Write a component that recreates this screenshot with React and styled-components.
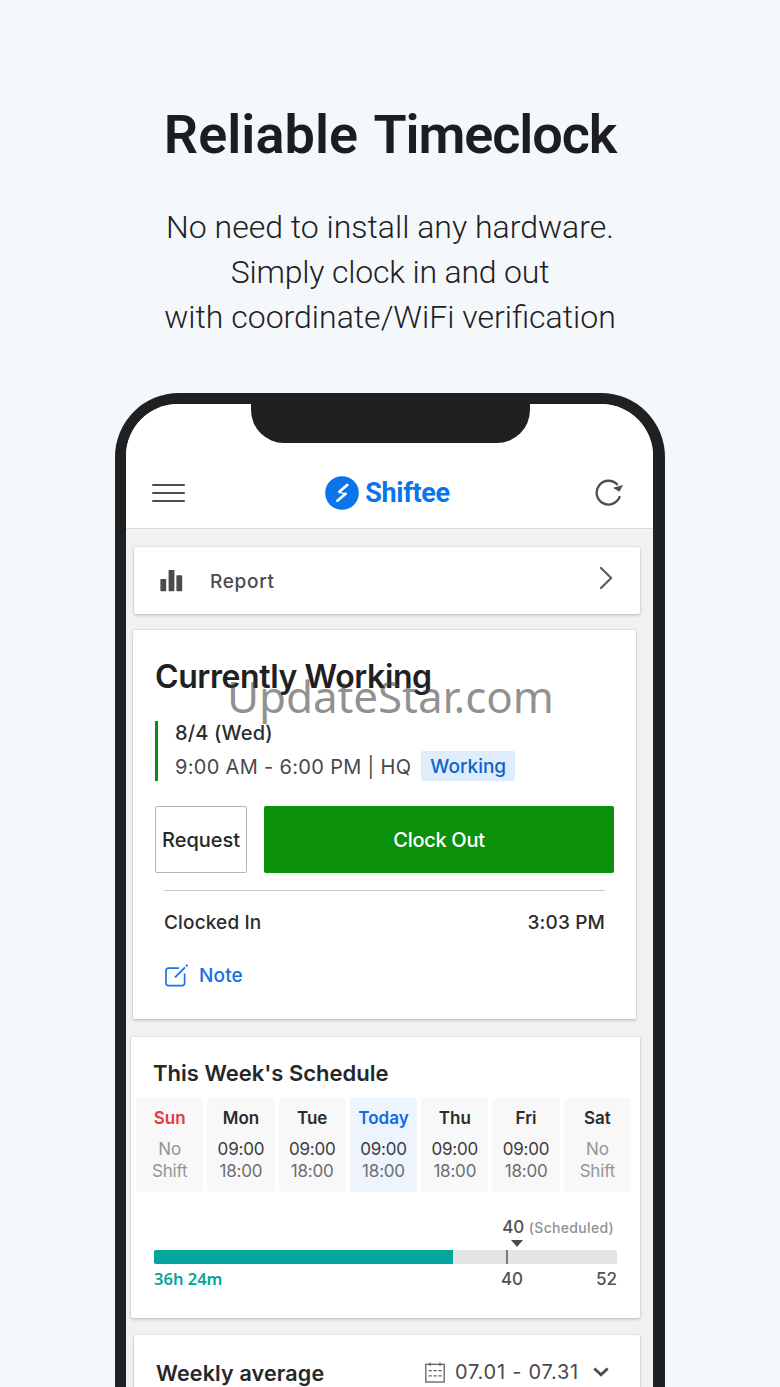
import styled, { createGlobalStyle, css } from "styled-components";

const week = [
  { day: "Sun", off: true, tone: "#e03c3c" },
  { day: "Mon", start: "09:00", end: "18:00" },
  { day: "Tue", start: "09:00", end: "18:00" },
  { day: "Today", start: "09:00", end: "18:00", today: true, tone: "#0f6be6" },
  { day: "Thu", start: "09:00", end: "18:00" },
  { day: "Fri", start: "09:00", end: "18:00" },
  { day: "Sat", off: true },
];

const worked = 299;
const limit = 463;

const ShifteeMark = () => (
  <svg width="34" height="34" viewBox="-17 -17 34 34">
    <circle r="16.8" fill="#0a75eb" />
    <path
      d="M5.2 -8 L-2.6 -1.2 M3.6 0.8 L-4.6 7.7"
      stroke="#fff"
      strokeWidth="2.8"
      strokeLinecap="round"
    />
    <path d="M-2.4 -0.4 L3 0.6" stroke="#fff" strokeWidth="1.2" />
  </svg>
);

const RefreshIcon = () => (
  <svg width="28" height="28" viewBox="0 0 28 28" fill="none">
    <path
      d="M24.9 17.2 A11.9 11.9 0 1 1 22.6 5.9"
      stroke="#4c4e50"
      strokeWidth="2.3"
    />
    <path d="M18 8.8 L28 6 L24.4 12.8 Z" fill="#4c4e50" />
  </svg>
);

const ReportIcon = () => (
  <svg width="23" height="22" viewBox="0 0 23 22" fill="#4a4b4e">
    <rect x="0.4" y="9" width="5.8" height="12.2" rx="0.6" />
    <rect x="8.6" y="0" width="5.8" height="21.2" rx="0.6" />
    <rect x="16.4" y="5.2" width="5.8" height="16" rx="0.6" />
  </svg>
);

const ChevronRight = () => (
  <svg width="14" height="24" viewBox="0 0 14 24" fill="none">
    <path
      d="M2 2 L12.2 12 L2 22"
      stroke="#5b5d5f"
      strokeWidth="2.2"
      strokeLinecap="round"
      strokeLinejoin="round"
    />
  </svg>
);

const NoteIcon = () => (
  <svg width="24" height="24" viewBox="0 0 24 24" fill="none" stroke="#1a73e8" strokeWidth="1.7">
    <path d="M15 4.2 H4.2 A2.2 2.2 0 0 0 2 6.4 V19.4 A2.2 2.2 0 0 0 4.2 21.6 H18.4 A2.2 2.2 0 0 0 20.6 19.4 V9.6" />
    <path d="M11 13.4 L21 3.4" strokeWidth="2" />
    <path d="M22 2.4 L23.6 0.8" strokeWidth="2" />
  </svg>
);

const CalendarIcon = () => (
  <svg width="20" height="21" viewBox="0 0 20 21" fill="none" stroke="#5f6163" strokeWidth="1.3">
    <rect x="0.8" y="2.3" width="18.4" height="17.7" />
    <path d="M5 0.5 V4 M15 0.5 V4" />
    <path d="M3.6 8.6 H16.6 M3.6 13.9 H16.6" strokeWidth="1.4" strokeDasharray="3.2 1.7" />
  </svg>
);

const ChevronDown = () => (
  <svg width="16" height="10" viewBox="0 0 16 10" fill="none">
    <path d="M1.3 1.4 L8 7.8 L14.7 1.4" stroke="#4c4e50" strokeWidth="2.8" />
  </svg>
);

const App = () => {
  return (
    <Page>
      <GlobalStyle />
      <Title>
        <Word $spacing="0.05px">Reliable</Word> <Word $spacing="-1.1px">Timeclock</Word>
      </Title>
      <Subtitle>
        <Line>No need to install any hardware.</Line>
        <Line $spacing="-0.18px">Simply clock in and out</Line>
        <Line>with coordinate/WiFi verification</Line>
      </Subtitle>

      <Phone>
        <Screen>
          <TopBar>
            <Notch />
            <Nav>
              <Menu>
                <MenuLine />
                <MenuLine />
                <MenuLine />
              </Menu>
              <Brand>
                <ShifteeMark />
                <BrandName>Shiftee</BrandName>
              </Brand>
              <Refresh>
                <RefreshIcon />
              </Refresh>
            </Nav>
          </TopBar>

          <ReportCard>
            <ReportMark>
              <ReportIcon />
            </ReportMark>
            <ReportLabel>Report</ReportLabel>
            <ChevronRight />
          </ReportCard>

          <StatusCard>
            <StatusTitle>Currently Working</StatusTitle>
            <Shift>
              <ShiftDate>8/4 (Wed)</ShiftDate>
              <ShiftRow>
                <ShiftTime>9:00 AM - 6:00 PM | HQ</ShiftTime>
                <Badge>Working</Badge>
              </ShiftRow>
            </Shift>
            <Buttons>
              <Button>Request</Button>
              <Button $primary>Clock Out</Button>
            </Buttons>
            <Details>
              <DetailRow>
                <span>Clocked In</span>
                <span>3:03 PM</span>
              </DetailRow>
              <NoteLink>
                <NoteIcon />
                Note
              </NoteLink>
            </Details>
          </StatusCard>

          <WeekCard>
            <WeekTitle>This Week's Schedule</WeekTitle>
            <Days>
              {week.map((d) => (
                <Day key={d.day} $today={d.today}>
                  <DayName $tone={d.tone}>{d.day}</DayName>
                  <DayTime $off={d.off}>{d.off ? "No" : d.start}</DayTime>
                  <DayTime $off={d.off} $end>
                    {d.off ? "Shift" : d.end}
                  </DayTime>
                </Day>
              ))}
            </Days>
            <Progress>
              <Scheduled>
                40 <small>(Scheduled)</small>
              </Scheduled>
              <Pointer />
              <Track>
                <Fill style={{ width: `${(worked / limit) * 100}%` }} />
                <Tick />
              </Track>
              <Scale>
                <Worked>36h 24m</Worked>
                <span>40</span>
                <span>52</span>
              </Scale>
            </Progress>
          </WeekCard>

          <AverageCard>
            <AverageTitle>Weekly average</AverageTitle>
            <Range>
              <CalendarIcon />
              <RangeText>07.01 - 07.31</RangeText>
              <ChevronDown />
            </Range>
          </AverageCard>
        </Screen>
      </Phone>
      <Watermark>UpdateStar.com</Watermark>
    </Page>
  );
};

const GlobalStyle = createGlobalStyle`
  * {
    box-sizing: border-box;
  }

  body {
    margin: 0;
    background: #f4f8fb;
    font-family: Inter, "Liberation Sans", sans-serif;
  }

  svg {
    display: block;
    flex: none;
  }
`;

const Page = styled.div`
  position: relative;
  width: 780px;
  height: 1387px;
  overflow: hidden;
  padding-top: 103px;
  background: #f4f8fb;
`;

const Title = styled.h1`
  margin: 0;
  text-align: center;
  font: 600 54px/64px Roboto, sans-serif;
  word-spacing: 2px;
  color: #1c1d20;
`;

const Word = styled.span`
  letter-spacing: ${(p) => p.$spacing};
`;

const Subtitle = styled.div`
  margin-top: 38px;
  text-align: center;
  font: 300 32px/45px Roboto, sans-serif;
  color: #1f2123;
`;

const Line = styled.p`
  margin: 0;
  letter-spacing: ${(p) => p.$spacing || "0"};
`;

const Phone = styled.div`
  width: 550px;
  height: 1100px;
  margin: 53px 0 0 115px;
  padding: 11px 12px 0 11px;
  border-radius: 64px;
  background: #1f2022;
`;

const Screen = styled.div`
  height: 100%;
  overflow: hidden;
  border-radius: 52px 52px 0 0;
  background: #eff1f3;
`;

const TopBar = styled.div`
  height: 125px;
  border-bottom: 1px solid #d9dbdd;
  background: #fff;
`;

const Notch = styled.div`
  width: 279px;
  height: 39px;
  margin-left: 125px;
  border-radius: 0 0 33px 33px;
  background: #1f2022;
`;

const Nav = styled.div`
  display: grid;
  grid-template-columns: 1fr auto 1fr;
  align-items: center;
  height: 85px;
  padding: 15px 30px 0 26px;
`;

const Menu = styled.div`
  display: flex;
  flex-direction: column;
  gap: 6px;
  width: 33px;
`;

const MenuLine = styled.div`
  height: 2px;
  border-radius: 1px;
  background: #4a4c4e;
`;

const Brand = styled.div`
  display: flex;
  align-items: center;
  gap: 6px;
`;

const BrandName = styled.span`
  font: 700 27px/32px Roboto, sans-serif;
  letter-spacing: -0.35px;
  color: #0a75eb;
`;

const Refresh = styled.div`
  justify-self: end;
`;

const card = css`
  border-radius: 2px;
  background: #fff;
  box-shadow: 0 0 1px 1px rgba(50, 60, 70, 0.08), 0 2px 3px rgba(50, 60, 70, 0.16);
`;

const ReportCard = styled.div`
  ${card}
  display: flex;
  align-items: center;
  width: 506px;
  height: 67px;
  margin: 18px 0 0 8px;
  padding: 0 27px 5px 26px;
`;

const ReportMark = styled.div`
  padding-top: 5px;
`;

const ReportLabel = styled.span`
  flex: 1;
  padding: 6px 0 0 27px;
  font-size: 19px;
  font-weight: 500;
  letter-spacing: 0.7px;
  color: #4a4b4e;
`;

const StatusCard = styled.div`
  ${card}
  width: 503px;
  height: 389px;
  margin: 16px 0 0 7px;
  padding: 27px 22px 0;
`;

const StatusTitle = styled.h2`
  margin: 0;
  font-size: 32px;
  line-height: 40px;
  font-weight: 600;
  letter-spacing: -0.4px;
  color: #1f2022;
`;

const Shift = styled.div`
  margin-top: 24px;
  padding-left: 17px;
  border-left: 3px solid #0a900a;
`;

const ShiftDate = styled.div`
  font-size: 20px;
  line-height: 24px;
  font-weight: 500;
  letter-spacing: 0.15px;
  color: #2b2c2e;
`;

const ShiftRow = styled.div`
  display: flex;
  align-items: center;
  gap: 10px;
  height: 30px;
  margin-top: 6px;
`;

const ShiftTime = styled.span`
  padding-top: 1px;
  font-size: 20px;
  letter-spacing: 0.32px;
  white-space: nowrap;
  color: #48494c;
`;

const Badge = styled.span`
  height: 30px;
  padding: 0 9px;
  border-radius: 2px;
  background: #dfecfb;
  font-size: 19px;
  line-height: 31px;
  font-weight: 500;
  color: #0c64c4;
`;

const Buttons = styled.div`
  display: flex;
  gap: 17px;
  margin-top: 25px;
`;

const Button = styled.button`
  flex: none;
  width: ${(p) => (p.$primary ? "350px" : "92px")};
  height: 67px;
  padding: 0;
  border: ${(p) => (p.$primary ? "0" : "1px solid #b4b5b7")};
  border-radius: 2px;
  background: ${(p) => (p.$primary ? "#0a900a" : "#fff")};
  font-family: inherit;
  font-size: 20px;
  font-weight: 500;
  letter-spacing: ${(p) => (p.$primary ? "-0.3px" : "-0.05px")};
  color: ${(p) => (p.$primary ? "#fff" : "#262729")};
`;

const Details = styled.div`
  margin: 17px 9px 0;
  padding-top: 20px;
  border-top: 1px solid #c6c8ca;
  font-size: 19px;
  line-height: 24px;
  font-weight: 500;
  letter-spacing: 0.15px;
  color: #2b2c2e;
`;

const DetailRow = styled.div`
  display: flex;
  justify-content: space-between;
`;

const NoteLink = styled.div`
  display: flex;
  align-items: center;
  gap: 11px;
  margin-top: 29px;
  color: #1670e0;
`;

const WeekCard = styled.div`
  ${card}
  width: 509px;
  height: 281px;
  margin: 18px 0 0 5px;
  padding: 21px 9px 0 5px;
`;

const WeekTitle = styled.h3`
  margin: 0 0 10px 17px;
  font-size: 22px;
  line-height: 30px;
  font-weight: 600;
  color: #262729;
`;

const Days = styled.div`
  display: grid;
  grid-template-columns: repeat(7, 1fr);
  gap: 4px;
`;

const Day = styled.div`
  height: 94px;
  padding-top: 9px;
  border-radius: 3px;
  text-align: center;
  background: ${(p) => (p.$today ? "#edf4fe" : "#f8f8f9")};
`;

const DayName = styled.div`
  margin-bottom: 10px;
  font-size: 17px;
  line-height: 22px;
  font-weight: 600;
  color: ${(p) => p.$tone || "#2b2c2e"};
`;

const DayTime = styled.div`
  font-size: 17px;
  line-height: 21.5px;
  letter-spacing: -0.2px;
  color: ${(p) => (p.$off ? "#939597" : p.$end ? "#6c6e70" : "#3c3d40")};
`;

const Progress = styled.div`
  width: 463px;
  margin: 25px 0 0 18px;
  color: #505254;
`;

const Scheduled = styled.div`
  padding-right: 3px;
  text-align: right;
  font-size: 17px;
  line-height: 20px;
  font-weight: 500;

  small {
    font-size: 14px;
    letter-spacing: 0.32px;
    color: #8e9092;
  }
`;

const Pointer = styled.div`
  width: 0;
  margin: 2px 0 3px 357px;
  border: 6px solid transparent;
  border-top: 7px solid #4a4b4e;
  border-bottom: 0;
`;

const Track = styled.div`
  position: relative;
  height: 14px;
  border-radius: 2px;
  overflow: hidden;
  background: #e3e4e5;
`;

const Fill = styled.div`
  height: 100%;
  background: #05a49c;
`;

// sits on the bar at the 40 hour mark
const Tick = styled.div`
  position: absolute;
  top: 0;
  left: 352px;
  width: 2px;
  height: 100%;
  background: #77797b;
`;

const Scale = styled.div`
  display: flex;
  justify-content: space-between;
  gap: 73px;
  margin-top: 5px;
  font-size: 17px;
  line-height: 20px;
  font-weight: 500;
`;

const Worked = styled.span`
  flex: 1;
  font-family: "Noto Sans", sans-serif;
  font-size: 16.5px;
  font-weight: 600;
  color: #05a49c;
`;

const AverageCard = styled.div`
  ${card}
  display: flex;
  justify-content: space-between;
  width: 506px;
  height: 120px;
  margin: 17px 0 0 8px;
  padding: 23px 31px 0 22px;
`;

const AverageTitle = styled.h3`
  margin: 0;
  font-size: 21.5px;
  line-height: 30px;
  font-weight: 600;
  letter-spacing: 0.15px;
  color: #262729;
`;

const Range = styled.div`
  display: flex;
  align-items: center;
  gap: 10px;
  height: 28px;
`;

const RangeText = styled.span`
  margin-right: 4px;
  font-size: 20px;
  letter-spacing: 0.75px;
  color: #48494c;
`;

const Watermark = styled.div`
  position: absolute;
  top: 666px;
  left: 227px;
  font: 400 44px/60px "Noto Sans", sans-serif;
  letter-spacing: -0.1px;
  color: rgba(60, 60, 60, 0.58);
`;

export default App;
